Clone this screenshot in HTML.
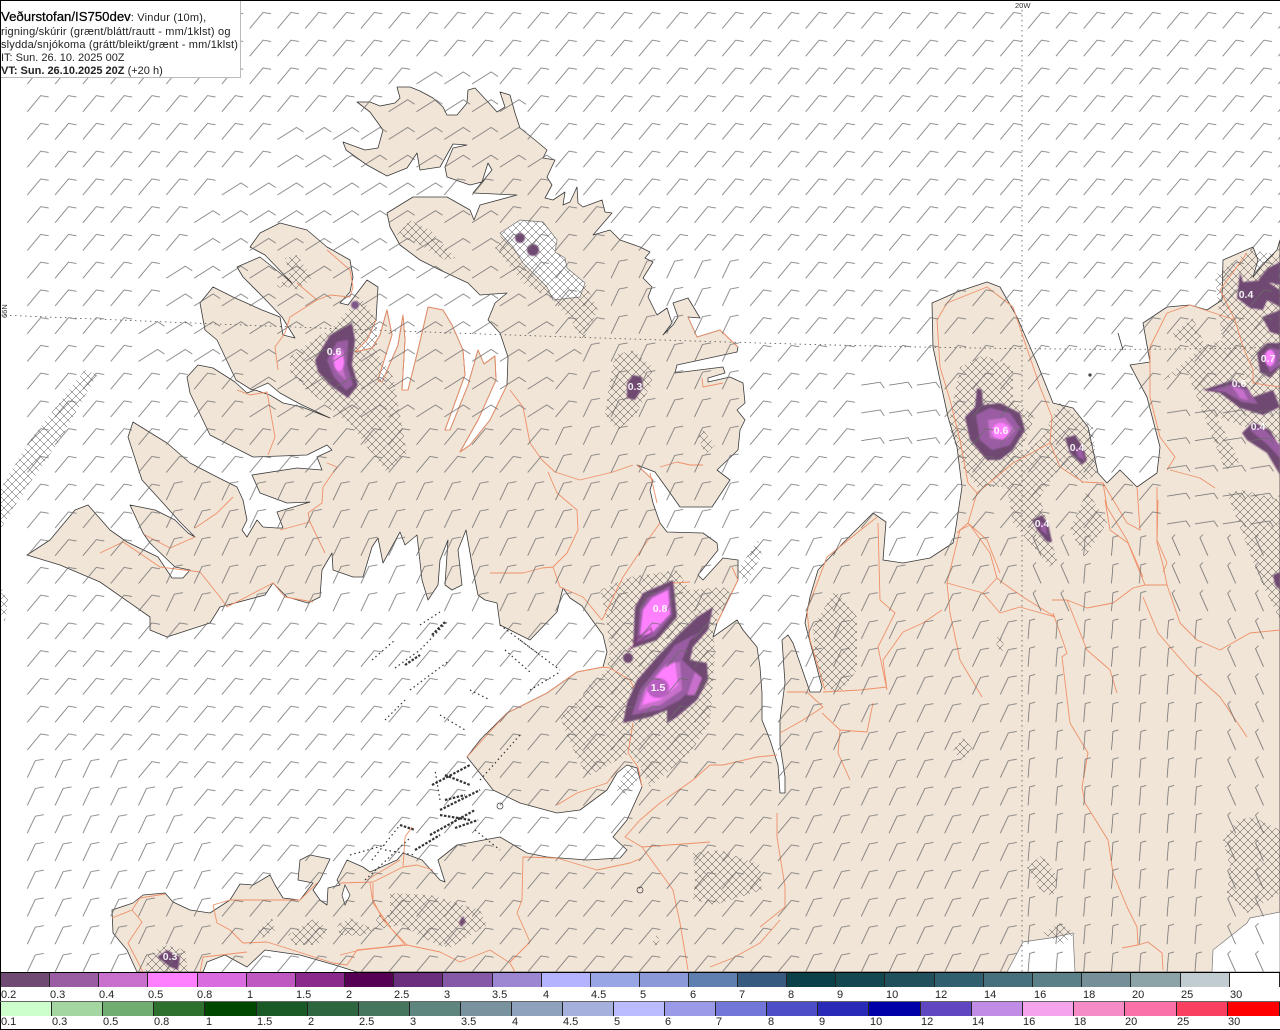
<!DOCTYPE html>
<html lang="is"><head><meta charset="utf-8"><title>Veðurstofan/IS750dev</title>
<style>
html,body{margin:0;padding:0;background:#fff}
#w{position:relative;width:1280px;height:1030px;overflow:hidden;font-family:"Liberation Sans",sans-serif;background:#fff}
svg{position:absolute;left:0;top:0}
#box{position:absolute;left:0;top:0;width:240px;height:77px;background:#fff;border-right:1px solid #bbb;border-bottom:1px solid #bbb;color:#222;font-size:11px}
#box div{position:absolute;left:1px;white-space:nowrap;line-height:13px}
.bd{position:absolute;background:#000}
.c{position:absolute;box-sizing:border-box;border-right:1px solid #222;height:14px}
.l{position:absolute;font-size:11px;line-height:12px;color:#222;white-space:nowrap}
</style></head><body><div id="w">
<svg width="1280" height="1030" viewBox="0 0 1280 1030">
<defs>
<pattern id="h" patternUnits="userSpaceOnUse" width="8" height="8"><path d="M0 0L8 8M8 0L0 8" stroke="#444" stroke-width=".5" fill="none"/></pattern>
<pattern id="A" patternUnits="userSpaceOnUse" width="1" height="1"><path transform="scale(.03597 .03604)" d="M1 22L14.4 6L22.4 7.3" stroke="#6a6a6a" stroke-width=".75" fill="none"/></pattern>
<pattern id="B" patternUnits="userSpaceOnUse" width="1" height="1"><path transform="scale(.03597 .03604)" d="M1 22L9 5L17.5 3.5" stroke="#6a6a6a" stroke-width=".75" fill="none"/></pattern>
<pattern id="C" patternUnits="userSpaceOnUse" width="1" height="1"><path transform="scale(.03597 .03604)" d="M1 22L20 10L27 14.5" stroke="#6a6a6a" stroke-width=".75" fill="none"/></pattern>
<pattern id="D" patternUnits="userSpaceOnUse" width="1" height="1"><path transform="scale(.03597 .03604)" d="M1 22L2.5 3.5L8 2" stroke="#6a6a6a" stroke-width=".75" fill="none"/></pattern>
<pattern id="F" patternUnits="userSpaceOnUse" width="1" height="1"><path transform="scale(.03597 .03604)" d="M1 18L20 15L24 21" stroke="#6a6a6a" stroke-width=".75" fill="none"/></pattern>
<pattern id="E" patternUnits="userSpaceOnUse" width="1" height="1"><path transform="scale(.03597 .03604)" d="M14 22L6 4L9 1" stroke="#6a6a6a" stroke-width=".75" fill="none"/></pattern>
<filter id="s" x="-5%" y="-5%" width="110%" height="110%"><feGaussianBlur stdDeviation=".8"/></filter>
</defs>

<path fill="#f1e5d8" stroke="#3a3a3a" stroke-width=".8" stroke-linejoin="round" d="M357 102L370 102 380 106 395 103 400 98 397 87 410 87 420 91 433 98 443 107 447 115 457 115 467 103 468 90 475 88 488 102 497 112 505 107 500 92 510 95 515 113 520 128 535 140 547 150 543 158 555 160 547 177 552 185 545 198 553 200 565 192 563 205 570 202 577 187 578 203 583 207 602 200 605 212 612 213 593 235 610 230 620 240 640 247 650 252 645 258 653 262 643 278 652 287 648 297 657 315 667 308 672 323 663 335 673 325 678 317 673 303 688 298 700 318 688 317 697 337 720 330 738 347 737 352 677 365 675 373 723 367 725 373 708 378 708 382 730 377 743 383 745 403 737 410 745 420 740 430 738 450 717 470 730 480 712 507 680 507 668 490 655 472 637 465 653 480 650 490 653 503 660 523 667 532 703 533 717 543 718 550 698 575 703 580 723 558 738 560 738 580 717 623 713 637 737 620 743 630 757 647 760 667 762 693 762 720 770 740 778 765 780 793 785 793 785 777 780 745 780 720 785 683 782 640 788 635 793 643 810 692 820 692 822 687 805 623 810 597 818 570 843 543 873 513 886 522 883 560 903 563 930 558 953 543 955 533 962 487 957 447 948 417 940 380 933 347 932 303 957 292 987 282 1000 287 1017 317 1037 363 1053 403 1073 408 1088 427 1098 473 1107 483 1120 470 1137 487 1157 473 1160 447 1147 397 1130 365 1150 362 1143 323 1167 307 1190 305 1207 310 1222 300 1223 260 1253 247 1258 260 1253 277 1267 260 1277 250 1280 240V972H357L335 965 300 955 265 950 247 967 225 955 207 962 203 972H137L127 950 113 933 112 910 133 903 143 895 165 893 173 902 190 910 210 913 230 900 240 884 253 885 270 875 275 885 283 898 300 900 313 883 298 880 300 860 310 855 330 859 320 880 313 890 320 900 327 905 328 888 340 885 337 880 347 860 363 867 370 872 397 860 403 853 422 860 440 880 445 882 438 860 457 845 500 837 527 853 547 857 587 860 620 858 627 850 613 837 627 820 642 787 637 768 627 765 617 773 607 790 580 810 557 813 520 803 493 790 483 777 467 757 480 740 507 713 547 693 577 672 603 667 607 652 603 635 582 606 570 598 563 588 557 612 530 640 500 625 497 603 485 600 478 595 473 570 466 530 458 550 462 585 452 590 445 585 448 540 440 560 438 585 428 600 422 580 417 535 405 545 400 532 383 563 378 538 372 547 363 577 353 577 333 570 332 553 322 570 320 597 308 603 287 597 273 583 265 595 220 607 210 623 167 637 150 630 150 617 100 582 60 565 27 555 50 540 75 510 88 505 110 530 127 542 158 557 172 578 183 578 190 570 175 567 150 543 143 533 130 505 155 510 175 520 188 533 195 537 180 522 163 503 142 480 128 437 133 422 167 443 190 463 217 477 237 487 243 500 247 520 242 530 247 537 257 520 263 527 277 528 283 528 277 512 310 502 287 503 260 493 252 475 297 468 322 470 317 457 332 450 327 445 307 455 253 457 210 435 190 393 187 377 198 365 213 368 235 382 247 393 255 390 270 395 283 403 302 407 330 418 300 404 280 393 268 383 252 390 236 380 217 340 205 330 200 303 213 287 233 297 262 310 280 317 283 335 295 338 282 317 263 297 243 277 237 267 260 257 280 273 292 283 265 255 250 247 260 233 280 223 307 230 327 247 350 260 353 277 350 292 340 303 348 305 367 280 378 287 376 320 367 340 355 352 372 348 380 335 387 310 392 335 378 380 382 382 398 345 403 315 405 340 402 390 408 390 418 350 428 307 443 310 452 325 463 350 465 375 445 430 450 430 468 385 478 350 484 364 495 356 496 380 478 420 460 452 470 445 490 420 507 385 508 357 500 333 488 320 495 303 507 293 480 295 468 283 440 270 420 260 400 245 390 227 387 213 413 197 447 197 470 210 474 220 480 205 517 195 473 193 492 170 488 163 482 182 470 185 447 177 445 167 453 148 467 145 453 144 440 167 420 170 417 153 407 168 387 176 367 165 346 150 343 142 365 150 378 148 383 130 370 112Z"/>

<!-- glaciers / lakes -->
<g fill="#fff" stroke="#777" stroke-width=".7">
<path d="M500 233L520 220 543 222 557 240 555 252 565 258 567 268 585 283 580 297 553 300 547 287 523 263 513 247Z"/>
<path d="M1007 972L1023 942 1050 938 1073 933 1075 972Z"/>
<path d="M1212 972L1213 950 1247 923 1250 918 1280 912V972Z"/>
<path d="M345 885L350 895 345 905 342 895Z" stroke="#333"/>
</g>

<!-- hatching -->
<path fill="url(#h)" d="M290 357L313 340 333 327 360 297 377 320 377 353 393 377 407 453 387 472 367 447 353 427 308 390 290 373Z
M285 258L297 255 312 278 297 290 287 287 273 288 290 277Z
M397 235L410 220 430 230 456 258 445 260 420 245Z
M495 248L502 233 520 220 543 222 557 240 555 252 565 258 567 268 585 283 598 310 583 340 570 320 553 300 523 283Z
M615 355L633 350 652 367 652 383 637 413 618 430 605 415 610 380Z
M698 437L703 430 715 445 705 455Z
M605 610L600 590 630 577 677 570 690 590 723 587 730 593 713 627 715 653 710 723 690 753 650 787 640 767 630 753 587 777 570 743 560 717 583 695 590 683 607 670 610 650Z
M615 790L630 765 640 775 628 795Z
M738 570L758 540 762 555 745 585Z
M85 370L97 375 60 440 25 490 0 530 0 490 30 440Z
M0 585L8 600 5 622 0 612Z
M148 955L165 945 185 950 188 972 145 972Z
M258 930L272 918 275 930 262 938Z
M288 935L315 918 328 930 318 945 295 945Z
M337 925L350 918 375 930 362 936 340 935Z
M390 893L430 895 480 910 487 925 450 948 437 945 400 925 375 930 377 915 390 915Z
M693 853L720 850 760 865 762 890 715 905 693 900 695 880Z
M950 417L960 367 983 355 1013 367 1013 400 1035 417 1020 453 1040 440 1060 403 1093 427 1097 473 1083 483 1060 467 1040 497 1057 560 1050 567 1013 523 1007 487 977 487 963 467 950 430Z
M1070 530L1087 490 1107 523 1085 557Z
M1215 275L1250 250 1280 255V440L1240 425 1222 340Z
M1170 335L1193 318 1205 345 1222 340 1240 425 1217 417 1240 462 1225 470 1187 372 1163 380 1198 350Z
M1227 493L1243 490 1280 500V620L1258 575Z
M1223 840L1237 820 1253 817 1280 830V893L1247 913 1227 893 1230 867Z
M813 627L835 590 857 617 857 670 840 693 823 687 815 657Z
M953 750L963 738 972 748 962 762Z
M995 640L1000 634 1005 648 1000 654Z
M1027 867L1042 855 1058 877 1053 897 1040 890Z
M1043 933L1060 923 1075 933 1062 945Z
M653 941L657 935 660 942 655 947Z"/>

<!-- dotted grid -->
<path d="M0 315Q420 333 760 343T1280 347M1022 10V972" fill="none" stroke="#555" stroke-width=".8" stroke-dasharray="1.5 3.5"/>

<!-- roads -->
<g fill="none" stroke="#ef9068" stroke-width=".9" stroke-linejoin="round">
<path d="M327 250L350 270 353 287 350 297 330 295 317 300 297 283M317 300L290 317 285 333 275 347 278 370M237 390L250 395 267 392 272 420 275 437 268 455M233 497L217 513 195 528M145 535L170 548 195 537M327 463L337 467 323 487 322 503 308 513 310 522 280 530M310 522L325 553M100 553L123 542 160 567 200 572 220 597 227 607 273 583 285 597 313 602M510 390L523 407 530 443 542 460 555 472 580 480 613 472 633 465M548 472L557 493 577 510 578 530 567 553 553 567 542 568 523 573 490 573M553 567L560 587 583 597 602 620 623 577 650 537 660 523M660 467L677 462 690 465 703 465M650 473L657 503M702 378L703 387 723 383M732 567L738 580 717 623M690 582L673 583 655 600"/>
<path d="M376 320L367 340 355 352 372 348 380 335 387 310 392 335 378 380 382 382 398 345 403 315 405 340 402 390 408 390 418 350 428 307 443 310 452 325 463 350 465 375 445 430 450 430 468 385 478 350 484 364 495 356 496 380 478 420 460 452 470 445 490 420 507 385M688 317L697 337 720 330 738 347M637 465L653 480"/>
<path d="M777 755L757 757 723 765 710 765 693 780 660 803 640 820 625 837 642 847 710 842M642 847L673 890 680 923 688 970M642 858L630 863 597 870 557 858 523 857 522 900 517 913 530 942 510 962M340 955L360 950 407 945 440 952 460 962 490 950 510 963 515 972M373 883L373 900 383 920 407 945M340 883L373 882 403 867 405 837 412 827M403 867L417 865 433 870M633 723L628 753 638 767 642 787M467 757L507 713 547 693 577 672 603 667 610 668 630 680 640 700M557 805L577 793 607 783 617 770M710 967L733 958 760 943 780 920"/>
<path d="M112 918L132 910 140 898 165 894M132 910L142 922 128 943 143 972M213 905L230 900M213 905L217 923 230 930 243 943 267 942 283 947 333 963 347 965 357 950 403 945M200 972L203 957 247 952M230 900L287 900 300 900 317 883M367 880L400 860M370 883L373 903 390 927 405 945"/>
<path d="M877 517L827 557 807 610 810 640 825 690M878 523L880 600 895 613 878 647 887 690M823 692L860 690 887 687M787 692L807 692 823 707 803 720 780 733M822 713L840 730 867 732 873 703M840 730L838 753 850 780M947 583L960 530 970 525 990 553 997 578 1003 583 1023 597 1055 617M947 583L983 593 1000 613 1020 607 1055 617M983 593L997 578M942 610L923 623 903 632 883 660 887 690M947 583L950 613 960 660 982 697M1052 600L1067 600 1087 608 1113 603 1133 588 1145 585 1167 585 1180 623 1197 640 1220 650 1250 633 1280 630M1145 585L1128 543 1110 530 1105 500M1167 585L1163 565 1157 543 1158 500M1143 597L1158 633 1190 670 1220 697 1247 737M1053 613L1067 653 1062 657 1070 723 1088 753 1082 787 1085 803 1108 840 1113 873 1127 907 1137 927 1138 945 1148 942 1162 953 1163 970M1138 945L1122 948M1067 600L1087 650 1110 670 1117 693M777 813L777 837 785 887 785 907 760 927"/>
<path d="M937 320L940 367 950 400 960 440 968 483 977 493 968 523 987 540 1000 573M977 493L1013 463 1050 443 1052 417 1040 387 1013 307 987 287 947 303 937 320M968 523L957 533M1050 443L1060 467 1083 482 1103 483 1127 523 1140 530 1137 487M1103 483L1107 507 1127 540 1143 577M1157 487L1157 540 1167 563 1163 572M1167 470L1175 457 1160 437 1150 397 1150 347 1167 313 1190 305 1235 320 1243 347 1253 370 1253 383 1280 387M1235 320L1220 290 1247 253M1170 470L1200 478 1215 488"/>
</g>

<!-- rain -->
<g filter="url(#s)">
<path fill="#6f4a72" d="M315 360L330 335 352 323 355 340 352 365 358 385 348 398 330 385 318 372Z"/>
<path fill="#9a5da3" d="M327 360L337 342 348 340 347 365 353 385 346 390 334 377Z"/>
<path fill="#c870cc" d="M332 358L340 347 344 352 343 368 346 380 338 373Z"/>
<ellipse cx="339" cy="362" rx="5" ry="9" fill="#ff80ff"/>

<path fill="#6f4a72" d="M673 580L677 617 657 640 633 648 635 607 643 593Z"/>
<circle cx="628" cy="658" r="5" fill="#6f4a72"/>
<path fill="#9a5da3" d="M670 586L672 615 655 636 637 643 640 610 648 597Z"/>
<path fill="#ff80ff" d="M668 590L670 614 652 633 640 636 643 610 652 598Z"/>
<path fill="none" stroke="#7a2a70" d="M628 650L652 632 651 628 632 642"/>

<path fill="#6f4a72" d="M713 607L708 630 693 647 690 660 707 663 708 680 697 700 677 717 667 723 667 710 650 717 623 723 627 703 637 680 657 657 680 633 697 617Z"/>
<path fill="#9a5da3" d="M700 632L690 640 682 660 695 672 688 692 680 700 660 710 632 715 640 690 660 665 675 645Z"/>
<path fill="#c870cc" d="M680 662L682 690 660 705 638 710 645 688 665 665ZM695 672L702 678 695 695 687 695Z"/>
<path fill="#ff80ff" d="M675 662L678 685 660 700 642 705 648 688 662 670Z"/>
<ellipse cx="658" cy="688" rx="11" ry="10" fill="#b75fc0"/>

<path fill="#6f4a72" d="M627 383L633 375 642 377 643 387 635 400 627 398Z"/>
<circle cx="520" cy="238" r="5" fill="#6f4a72"/>
<circle cx="533" cy="250" r="6" fill="#6f4a72"/>
<circle cx="355" cy="305" r="4" fill="#7d5587"/>
<path fill="#6f4a72" d="M459 922L463 916 466 922 461 927Z"/>
<path fill="#6f4a72" d="M157 957L167 950 180 957 178 970 170 967Z"/>

<path fill="#6f4a72" d="M977 388L982 390 983 405 1000 403 1020 413 1025 430 1013 450 1000 460 987 460 970 440 965 417 975 407Z"/>
<path fill="#9a5da3" d="M976 415L990 408 1010 413 1020 428 1010 445 992 450 980 440Z"/>
<path fill="#c870cc" d="M988 420L1005 418 1015 430 1005 440 990 438Z"/>
<ellipse cx="1001" cy="431" rx="9" ry="8" fill="#ff80ff"/>
<path fill="#6f4a72" d="M1065 438L1075 435 1083 447 1087 460 1082 465 1070 453Z"/>
<path fill="#9a5da3" d="M1075 447L1082 450 1085 460 1078 457Z"/>
<path fill="#6f4a72" d="M1032 520L1042 515 1048 523 1052 542 1047 542 1037 530Z"/>
<path fill="#9a5da3" d="M1040 522L1046 525 1047 535 1041 530Z"/>

<path fill="#6f4a72" d="M1240 272L1243 282 1265 280 1280 290V307L1267 300 1263 310 1250 308 1237 298Z"/>
<path fill="#6f4a72" d="M1258 280L1268 268 1280 262V285Z"/>
<path fill="#6f4a72" d="M1262 317L1280 310V335L1270 332Z"/>
<path fill="#6f4a72" d="M1257 353L1267 343 1280 343V367L1270 378 1260 372Z"/>
<path fill="#9a5da3" d="M1262 355L1270 348 1280 350V365L1270 372Z"/>
<ellipse cx="1270" cy="358" rx="5" ry="8" fill="#ff80ff"/>
<path fill="#6f4a72" d="M1203 390L1233 380 1247 387 1253 397 1273 390 1280 407 1263 415 1240 408 1220 393Z"/>
<path fill="#9a5da3" d="M1212 390L1233 384 1248 390 1258 404 1242 402 1225 392Z"/>
<path fill="#c870cc" d="M1232 386L1243 390 1248 400 1240 398Z"/>
<path fill="#6f4a72" d="M1242 433L1253 422 1270 430 1280 447V475L1267 453 1247 440Z"/>
<path fill="#9a5da3" d="M1250 430L1262 427 1280 445V458L1268 445Z"/>
<path fill="#6f4a72" d="M1273 575L1280 572V590L1275 585Z"/>
</g>

<!-- barbs -->
<g transform="translate(26.3 6.45) scale(27.8 27.75)">
<path fill="url(#C)" d="M14 2h3v1h-3zM13 3h5v1h-5zM9 4h9v1h-9zM9 5h10v1h-10zM7 6h8v1h-8zM6 7h11v1h-11zM6 8h11v1h-11zM5 9h13v1h-13zM5 10h14v1h-14zM4 11h15v1h-15zM4 12h16v1h-16zM8 13h11v1h-11zM8 14h11v1h-11z"/>
<path fill="url(#B)" d="M21 9h5v3h-5zM20 12h6v3h-6zM19 15h7v2h-7zM12 17h14v5h-14zM5 17h7v5h-7zM0 27h4v1h-4zM0 28h6v2h-6zM0 30h7v5h-7zM28 19h8v16h-8z"/>
<path fill="url(#D)" d="M36 22h7v13h-7zM38 19h3v3h-3z"/>
<path fill="url(#F)" d="M41 14h5v5h-5zM30 13h3v3h-3z"/>
<path fill="url(#E)" d="M36 19h2v3h-2zM41 19h5v3h-5zM43 22h3v13h-3z"/>
<path fill="url(#A)" fill-rule="evenodd" d="M0 0h46v35h-46zM14 2h3v1h-3zM13 3h5v1h-5zM9 4h9v1h-9zM9 5h10v1h-10zM7 6h8v1h-8zM6 7h11v1h-11zM6 8h11v1h-11zM5 9h13v1h-13zM5 10h14v1h-14zM4 11h15v1h-15zM4 12h16v1h-16zM8 13h11v1h-11zM8 14h11v1h-11zM21 9h5v3h-5zM20 12h6v3h-6zM19 15h7v2h-7zM12 17h14v5h-14zM5 17h7v5h-7zM0 27h4v1h-4zM0 28h6v2h-6zM0 30h7v5h-7zM28 19h8v16h-8zM36 22h7v13h-7zM38 19h3v3h-3zM41 14h5v5h-5zM30 13h3v3h-3zM36 19h2v3h-2zM41 19h5v3h-5zM43 22h3v13h-3z"/>
</g>

<!-- islands / skerries -->
<g fill="none" stroke="#333" stroke-width="1.2">
<path stroke-dasharray="1.5 3" d="M395 668L420 650 447 622M372 660L395 640M420 625L440 612M410 690L450 660M500 625L540 655M520 640L560 670M505 650L530 672M530 690L560 672M385 720L405 700M440 715L465 730M470 690L490 700"/>
<path stroke-width="2.2" stroke-dasharray="2.5 1.5" d="M405 665L420 655M432 635L445 622M432 785L470 765M445 775L470 785M440 810L480 790M440 815L470 820M430 835L475 810M415 850L440 835M400 825L415 830M445 800L465 795M455 828L478 820"/>
<path stroke-dasharray="1.5 3" d="M365 880L410 838M372 860L400 825M440 800L435 770M475 830L500 850M480 780L520 735M385 850L415 855M350 855L385 845"/>
<circle cx="500" cy="806" r="3" stroke-width=".7"/><circle cx="640" cy="890" r="3" stroke-width=".7"/>
<path stroke-width=".8" d="M1118 333L1123 350"/><circle cx="1090" cy="375" r="1"/>
</g>

<!-- blob labels -->
<g fill="#fff" font-family="'Liberation Sans',sans-serif" font-size="10.5" font-weight="bold" text-anchor="middle" opacity=".92">
<text x="334" y="355">0.6</text><text x="660" y="612">0.8</text><text x="658" y="691">1.5</text><text x="635" y="390">0.3</text>
<text x="1001" y="434">0.6</text><text x="1077" y="451">0.4</text><text x="1042" y="527">0.4</text><text x="1246" y="298">0.4</text>
<text x="1268" y="362">0.7</text><text x="1239" y="387">0.6</text><text x="1258" y="430">0.4</text><text x="170" y="960">0.3</text>
</g>
<text x="1015" y="8" font-size="7.5" fill="#333" font-family="'Liberation Sans',sans-serif">20W</text>
<text transform="translate(7 318) rotate(-90)" font-size="7.5" fill="#333" font-family="'Liberation Sans',sans-serif">66N</text>
<rect x="0" y="972" width="1280" height="58" fill="#fff"/>
</svg>

<div id="box">
<div style="top:9px;font-size:13.2px;line-height:15px"><span style="-webkit-text-stroke:.25px #000;color:#000">Veðurstofan/IS750dev</span><span style="font-size:11px;letter-spacing:.2px">: Vindur (10m),</span></div>
<div style="top:26px;letter-spacing:.2px">rigning/skúrir (grænt/blátt/rautt - mm/1klst) og</div>
<div style="top:39px;letter-spacing:.18px">slydda/snjókoma (grátt/bleikt/grænt - mm/1klst)</div>
<div style="top:52px">IT: Sun. 26. 10. 2025 00Z</div>
<div style="top:65px"><b>VT: Sun. 26.10.2025 20Z</b> (+20 h)</div>
</div>
<div class="bd" style="left:0;top:0;width:1280px;height:1px"></div>
<div class="bd" style="left:0;top:0;width:1px;height:1030px"></div>

<!-- legend row 1 -->
<div class="bd" style="left:0;top:972px;width:1280px;height:1px"></div>
<div class="c" style="top:973px;left:1px;width:49px;background:#6f4a72"></div>
<div class="c" style="top:973px;left:50px;width:49px;background:#9a5da3"></div>
<div class="c" style="top:973px;left:99px;width:49px;background:#c870cc"></div>
<div class="c" style="top:973px;left:148px;width:50px;background:#ff80ff"></div>
<div class="c" style="top:973px;left:198px;width:49px;background:#d96cdf"></div>
<div class="c" style="top:973px;left:247px;width:49px;background:#bf58c0"></div>
<div class="c" style="top:973px;left:296px;width:49px;background:#8a2a8c"></div>
<div class="c" style="top:973px;left:345px;width:49px;background:#550055"></div>
<div class="c" style="top:973px;left:394px;width:49px;background:#6b2d7e"></div>
<div class="c" style="top:973px;left:443px;width:50px;background:#8558a8"></div>
<div class="c" style="top:973px;left:493px;width:49px;background:#9d86d2"></div>
<div class="c" style="top:973px;left:542px;width:49px;background:#b3b3ff"></div>
<div class="c" style="top:973px;left:591px;width:49px;background:#99a6e6"></div>
<div class="c" style="top:973px;left:640px;width:49px;background:#8c99d9"></div>
<div class="c" style="top:973px;left:689px;width:49px;background:#5f7fb0"></div>
<div class="c" style="top:973px;left:738px;width:49px;background:#365a80"></div>
<div class="c" style="top:973px;left:787px;width:49px;background:#0a4048"></div>
<div class="c" style="top:973px;left:836px;width:49px;background:#144850"></div>
<div class="c" style="top:973px;left:885px;width:50px;background:#1f505c"></div>
<div class="c" style="top:973px;left:935px;width:49px;background:#305f70"></div>
<div class="c" style="top:973px;left:984px;width:49px;background:#45707c"></div>
<div class="c" style="top:973px;left:1033px;width:49px;background:#5c8088"></div>
<div class="c" style="top:973px;left:1082px;width:49px;background:#759098"></div>
<div class="c" style="top:973px;left:1131px;width:50px;background:#8ca4a8"></div>
<div class="c" style="top:973px;left:1181px;width:49px;background:#c0ccd0"></div>
<div class="c" style="top:973px;left:1230px;width:50px;background:#fff"></div>
<div class="l" style="top:989px;left:1px">0.2</div><div class="l" style="top:989px;left:50px">0.3</div><div class="l" style="top:989px;left:99px">0.4</div><div class="l" style="top:989px;left:148px">0.5</div><div class="l" style="top:989px;left:197px">0.8</div><div class="l" style="top:989px;left:247px">1</div><div class="l" style="top:989px;left:296px">1.5</div><div class="l" style="top:989px;left:346px">2</div><div class="l" style="top:989px;left:394px">2.5</div><div class="l" style="top:989px;left:444px">3</div><div class="l" style="top:989px;left:492px">3.5</div><div class="l" style="top:989px;left:543px">4</div><div class="l" style="top:989px;left:591px">4.5</div><div class="l" style="top:989px;left:640px">5</div><div class="l" style="top:989px;left:690px">6</div><div class="l" style="top:989px;left:739px">7</div><div class="l" style="top:989px;left:788px">8</div><div class="l" style="top:989px;left:837px">9</div><div class="l" style="top:989px;left:886px">10</div><div class="l" style="top:989px;left:935px">12</div><div class="l" style="top:989px;left:984px">14</div><div class="l" style="top:989px;left:1034px">16</div><div class="l" style="top:989px;left:1083px">18</div><div class="l" style="top:989px;left:1132px">20</div><div class="l" style="top:989px;left:1181px">25</div><div class="l" style="top:989px;left:1230px">30</div>

<!-- legend row 2 -->
<div class="bd" style="left:0;top:1001px;width:1280px;height:1px;background:#666"></div>
<div class="c" style="top:1002px;left:1px;width:51px;background:#ccffcc"></div>
<div class="c" style="top:1002px;left:52px;width:51px;background:#a3d6a0"></div>
<div class="c" style="top:1002px;left:103px;width:51px;background:#70ad70"></div>
<div class="c" style="top:1002px;left:154px;width:51px;background:#2e702e"></div>
<div class="c" style="top:1002px;left:205px;width:52px;background:#004800"></div>
<div class="c" style="top:1002px;left:257px;width:51px;background:#1a5a26"></div>
<div class="c" style="top:1002px;left:308px;width:51px;background:#2e6640"></div>
<div class="c" style="top:1002px;left:359px;width:51px;background:#47765f"></div>
<div class="c" style="top:1002px;left:410px;width:51px;background:#5f857f"></div>
<div class="c" style="top:1002px;left:461px;width:51px;background:#78939e"></div>
<div class="c" style="top:1002px;left:512px;width:51px;background:#8fa2bd"></div>
<div class="c" style="top:1002px;left:563px;width:51px;background:#a6b0dc"></div>
<div class="c" style="top:1002px;left:614px;width:51px;background:#bbbbff"></div>
<div class="c" style="top:1002px;left:665px;width:51px;background:#9a9ae8"></div>
<div class="c" style="top:1002px;left:716px;width:51px;background:#7276d8"></div>
<div class="c" style="top:1002px;left:767px;width:51px;background:#4d4dc8"></div>
<div class="c" style="top:1002px;left:818px;width:51px;background:#2a2ab8"></div>
<div class="c" style="top:1002px;left:869px;width:52px;background:#0000a8"></div>
<div class="c" style="top:1002px;left:921px;width:51px;background:#6046c0"></div>
<div class="c" style="top:1002px;left:972px;width:51px;background:#c08ce6"></div>
<div class="c" style="top:1002px;left:1023px;width:51px;background:#f5a3eb"></div>
<div class="c" style="top:1002px;left:1074px;width:51px;background:#f58cc8"></div>
<div class="c" style="top:1002px;left:1125px;width:52px;background:#fa70a8"></div>
<div class="c" style="top:1002px;left:1177px;width:51px;background:#fa4060"></div>
<div class="c" style="top:1002px;left:1228px;width:52px;background:#ff0000"></div>
<div class="l" style="top:1016px;left:1px">0.1</div><div class="l" style="top:1016px;left:52px">0.3</div><div class="l" style="top:1016px;left:103px">0.5</div><div class="l" style="top:1016px;left:154px">0.8</div><div class="l" style="top:1016px;left:206px">1</div><div class="l" style="top:1016px;left:257px">1.5</div><div class="l" style="top:1016px;left:308px">2</div><div class="l" style="top:1016px;left:359px">2.5</div><div class="l" style="top:1016px;left:410px">3</div><div class="l" style="top:1016px;left:461px">3.5</div><div class="l" style="top:1016px;left:512px">4</div><div class="l" style="top:1016px;left:563px">4.5</div><div class="l" style="top:1016px;left:614px">5</div><div class="l" style="top:1016px;left:665px">6</div><div class="l" style="top:1016px;left:716px">7</div><div class="l" style="top:1016px;left:768px">8</div><div class="l" style="top:1016px;left:819px">9</div><div class="l" style="top:1016px;left:870px">10</div><div class="l" style="top:1016px;left:921px">12</div><div class="l" style="top:1016px;left:972px">14</div><div class="l" style="top:1016px;left:1023px">16</div><div class="l" style="top:1016px;left:1074px">18</div><div class="l" style="top:1016px;left:1125px">20</div><div class="l" style="top:1016px;left:1177px">25</div><div class="l" style="top:1016px;left:1228px">30</div>
<div class="bd" style="left:0;top:1029px;width:1280px;height:1px"></div>
</div></body></html>
